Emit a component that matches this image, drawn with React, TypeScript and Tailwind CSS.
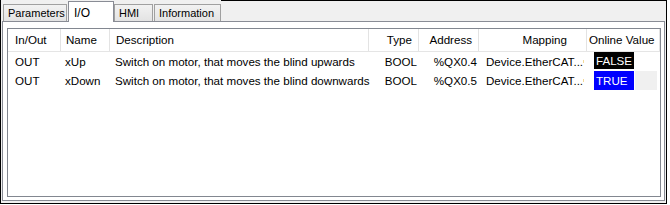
const cols = [
  { w: 'w-[53px]', head: 'In/Out', hc: 'pl-[7px]', dc: 'pl-[7px]' },
  { w: 'w-[49px]', head: 'Name', hc: 'pl-[5px]', dc: 'pl-[4px]' },
  { w: 'w-[259px]', head: 'Description', hc: 'pl-[6px]', dc: 'pl-[5px]' },
  { w: 'w-[50px]', head: 'Type', hc: 'justify-end pr-[6px]', dc: 'justify-end pr-[2px]' },
  { w: 'w-[60px]', head: 'Address', hc: 'justify-end pr-[6px]', dc: 'justify-end pr-[2px]' },
  { w: 'w-[108px]', head: 'Mapping', hc: 'justify-end pr-[19px]', dc: 'pl-[7px]' },
  { w: 'flex-1', head: 'Online Value', hc: 'pl-[2px]', dc: 'pl-[7px]' },
];

const rows = [
  { io: 'OUT', name: 'xUp', desc: 'Switch on motor, that moves the blind upwards', type: 'BOOL', addr: '%QX0.4', map: 'Device.EtherCAT...', value: 'FALSE' },
  { io: 'OUT', name: 'xDown', desc: 'Switch on motor, that moves the blind downwards', type: 'BOOL', addr: '%QX0.5', map: 'Device.EtherCAT...', value: 'TRUE' },
];

function Tab({ label, active, w }: { label: string; active?: boolean; w: string }) {
  if (active) {
    return (
      <div className={`${w} h-[21px] -mb-px relative z-10 bg-white border border-b-0 border-[#898c95] pl-[5px] pt-[2px] text-[12px]`}>
        {label}
      </div>
    );
  }
  return (
    <div className={`${w} h-[17px] bg-gradient-to-b from-[#f2f2f2] to-[#e3e3e3] border border-b-0 border-[#a0a0a0] pl-[4px] pt-px leading-[15px] text-[11px] whitespace-nowrap overflow-hidden`}>
      {label}
    </div>
  );
}

export default function App() {
  return (
    <div className="w-[670px] h-[205px] bg-white text-black font-['Liberation_Sans',Arial,sans-serif]">
      <div className="w-[667px] h-[204px] bg-[#f0f0f0] border-l border-r border-b border-black flex flex-col">
        {/* Tabs */}
        <div className="h-[21px] flex items-end pl-[2px] shrink-0">
          <Tab label="Parameters" w="w-[64px]" />
          <div className="w-[1px]" />
          <Tab label="I/O" active w="w-[46px]" />
          <Tab label="HMI" w="w-[39px]" />
          <div className="w-[1px]" />
          <Tab label="Information" w="w-[67px]" />
          <div className="flex-1 self-start border-t border-black" />
        </div>

        {/* Panel */}
        <div className="ml-px mr-px h-[180px] bg-white border border-[#898c95] pl-[4px] pr-[3px] pt-[6px] pb-[3px] shrink-0">
          <div className="h-full border border-[#828790] bg-white flex flex-col text-[11.6px]">
            {/* Header */}
            <div className="h-[23px] flex border-b border-[#e5e5e5] shrink-0">
              {cols.map((c) => (
                <div key={c.head} className={`${c.w} h-full flex items-center border-r border-[#e3e3e3] ${c.hc}`}>
                  {c.head}
                </div>
              ))}
            </div>

            {rows.map((r) => (
              <div key={r.name} className="h-[19px] flex">
                <div className={`${cols[0].w} flex items-center ${cols[0].dc}`}>{r.io}</div>
                <div className={`${cols[1].w} flex items-center ${cols[1].dc}`}>{r.name}</div>
                <div className={`${cols[2].w} flex items-center whitespace-nowrap ${cols[2].dc}`}>{r.desc}</div>
                <div className={`${cols[3].w} flex items-center ${cols[3].dc}`}>{r.type}</div>
                <div className={`${cols[4].w} flex items-center ${cols[4].dc}`}>{r.addr}</div>
                <div className={`${cols[5].w} flex items-center ${cols[5].dc}`}>
                  <span className="flex-1 whitespace-nowrap">{r.map}</span>
                  <span className="w-px h-[3px] bg-[#f3d99a] mr-[3px]" />
                </div>
                <div className={`${cols[6].w} flex items-start pl-[7px] pr-[3px]`}>
                  {r.value === 'FALSE' ? (
                    <span className="h-[17px] px-[2px] bg-black text-white flex items-center">FALSE</span>
                  ) : (
                    <>
                      <span className="h-[19px] pl-[2px] pr-[6px] bg-[#0000ff] text-white flex items-center">TRUE</span>
                      <span className="flex-1 h-[19px] ml-px bg-[#f0f0f0]" />
                    </>
                  )}
                </div>
              </div>
            ))}
          </div>
        </div>
      </div>
    </div>
  );
}
